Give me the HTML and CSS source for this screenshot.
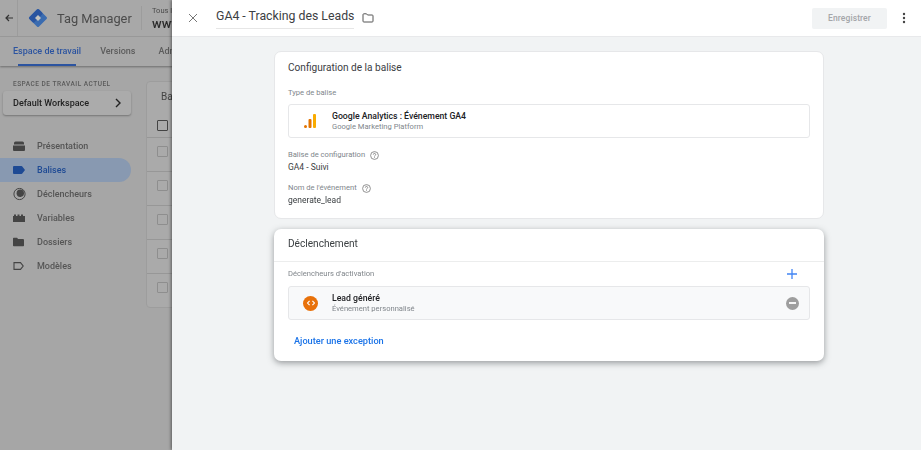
FILE: index.html
```html
<!DOCTYPE html>
<html lang="fr">
<head>
  <meta charset="UTF-8" />
  <title>Tag Manager</title>
  <link rel="stylesheet" href="styles.css">
</head>
<body>
  <div class="app">
    <header class="topbar">
      <button class="back">
        <svg width="10" height="10" viewBox="0 0 10 10"><path d="M9 5H2M5 2 2 5l3 3" fill="none" stroke="#333" stroke-width="1.2"/></svg>
      </button>
      <div class="brand">
        <svg class="logo" width="20" height="20" viewBox="0 0 20 20">
          <path d="M10 2.500 17.500 10 10 17.500 2.500 10Z" fill="#3b6cb0" stroke="#3b6cb0" stroke-width="3" stroke-linejoin="round"/>
          <path d="M10 2.500 13 5.500 5.500 13 2.500 10Z" fill="#2a55a0" stroke="#2a55a0" stroke-width="3" stroke-linejoin="round"/>
          <path d="M10 7 13 10 10 13 7 10Z" fill="#c4c4c0"/>
        </svg>
        <span class="brand-name">Tag Manager</span>
      </div>
      <div class="account">
        <span class="account-label">Tous l</span>
        <span class="account-name">www</span>
      </div>
    </header>
    <nav class="tabs">
      <span class="tab active">Espace de travail</span>
      <span class="tab">Versions</span>
      <span class="tab">Adm</span>
    </nav>
    <div class="work">
      <aside class="side">
        <div class="ws-label">ESPACE DE TRAVAIL ACTUEL</div>
        <div class="ws-button">
          <span>Default Workspace</span>
          <svg width="8" height="10" viewBox="0 0 8 10"><path d="M2 1l4 4-4 4" fill="none" stroke="#222" stroke-width="1.4"/></svg>
        </div>
        <ul class="nav">
          <li class="nav-item">
            <svg width="12" height="10" viewBox="0 0 12 10"><path d="M1 3.500V2a1.500 1.500 0 0 1 1.500-1.500h7A1.500 1.500 0 0 1 11 2v1.500ZM0 4.500h12V9a1 1 0 0 1-1 1H1a1 1 0 0 1-1-1Z" fill="#444"/></svg>
            Présentation
          </li>
          <li class="nav-item active">
            <svg width="12" height="8" viewBox="0 0 12 8"><path d="M1 0h7.500a1 1 0 0 1 .8.400L12 4 9.300 7.600a1 1 0 0 1-.8.400H1a1 1 0 0 1-1-1V1a1 1 0 0 1 1-1Z" fill="#1e4a94"/></svg>
            Balises
          </li>
          <li class="nav-item">
            <svg width="13" height="13" viewBox="0 0 13 13"><circle cx="6.500" cy="6.500" r="5.600" fill="none" stroke="#444" stroke-width="1"/><circle cx="7.300" cy="5.700" r="3.700" fill="#444"/><path d="M3.600 9.400A4 4 0 0 0 9.400 9" fill="none" stroke="#a6a6a6" stroke-width=".9"/></svg>
            Déclencheurs
          </li>
          <li class="nav-item">
            <svg width="12" height="8" viewBox="0 0 12 8"><path d="M0 8V2h1V.5h2V2h1.500V.5h2V2H8V.5h2V2h2v6Z" fill="#444"/></svg>
            Variables
          </li>
          <li class="nav-item">
            <svg width="11" height="9" viewBox="0 0 11 9"><path d="M0 1a1 1 0 0 1 1-1h3l1 1.500h5a1 1 0 0 1 1 1V8a1 1 0 0 1-1 1H1a1 1 0 0 1-1-1Z" fill="#444"/></svg>
            Dossiers
          </li>
          <li class="nav-item">
            <svg width="11" height="8" viewBox="0 0 11 8"><path d="M1 .6h6.500L10.200 4 7.500 7.400H1Z" fill="none" stroke="#444" stroke-width="1.100"/></svg>
            Modèles
          </li>
        </ul>
      </aside>
      <section class="list">
        <div class="list-title">Ba</div>
        <div class="list-head"><span class="check dark"></span></div>
        <div class="list-row"><span class="check"></span></div>
        <div class="list-row"><span class="check"></span></div>
        <div class="list-row"><span class="check"></span></div>
        <div class="list-row"><span class="check"></span></div>
        <div class="list-row"><span class="check"></span></div>
      </section>
    </div>
  </div>

  <main class="panel">
    <header class="panel-head">
      <button class="close">
        <svg width="10" height="10" viewBox="0 0 10 10"><path d="M1 1l8 8M9 1 1 9" stroke="#777" stroke-width="1"/></svg>
      </button>
      <h1 class="panel-title">GA4 - Tracking des Leads</h1>
      <svg class="folder" width="12" height="10" viewBox="0 0 12 10"><path d="M1 1.600a.8.8 0 0 1 .8-.8h2.700l1 1.200h4.700a.8.800 0 0 1 .8.800v5.400a.8.800 0 0 1-.8.800H1.800a.8.800 0 0 1-.8-.8Z" fill="none" stroke="#555" stroke-width="1"/></svg>
      <button class="save">Enregistrer</button>
      <svg class="more" width="4" height="12" viewBox="0 0 4 12"><circle cx="2" cy="2" r="1.200" fill="#444"/><circle cx="2" cy="6" r="1.200" fill="#444"/><circle cx="2" cy="10" r="1.200" fill="#444"/></svg>
    </header>

    <div class="panel-body">
      <section class="card">
        <h2 class="card-title">Configuration de la balise</h2>
        <div class="field-label">Type de balise</div>
        <div class="type-box">
          <svg class="type-icon" width="12" height="14" viewBox="0 0 12 14">
            <rect x="9" y="0" width="3" height="14" rx="1" fill="#f9ab00"/>
            <rect x="4.500" y="5" width="3" height="9" rx="1" fill="#e37400"/>
            <circle cx="1.500" cy="12.500" r="1.500" fill="#e37400"/>
          </svg>
          <div>
            <div class="type-name">Google Analytics : Événement GA4</div>
            <div class="type-sub">Google Marketing Platform</div>
          </div>
        </div>
        <div class="field-label help-label">Balise de configuration
          <svg width="9" height="9" viewBox="0 0 9 9"><circle cx="4.500" cy="4.500" r="3.900" fill="none" stroke="#777" stroke-width=".8"/><path d="M3.300 3.600a1.200 1.200 0 1 1 1.800 1c-.4.250-.6.450-.6.900M4.500 6.300v.7" fill="none" stroke="#777" stroke-width=".8"/></svg>
        </div>
        <div class="field-value">GA4 - Suivi</div>
        <div class="field-label help-label second">Nom de l'événement
          <svg width="9" height="9" viewBox="0 0 9 9"><circle cx="4.500" cy="4.500" r="3.900" fill="none" stroke="#777" stroke-width=".8"/><path d="M3.300 3.600a1.200 1.200 0 1 1 1.800 1c-.4.250-.6.450-.6.900M4.500 6.300v.7" fill="none" stroke="#777" stroke-width=".8"/></svg>
        </div>
        <div class="field-value">generate_lead</div>
      </section>

      <section class="card raised">
        <h2 class="raised-title">Déclenchement</h2>
        <div class="raised-body">
          <div class="trigger-head">
            <span class="field-label flat">Déclencheurs d'activation</span>
            <svg width="10" height="10" viewBox="0 0 10 10"><path d="M5 0v10M0 5h10" stroke="#4285f4" stroke-width="1.300"/></svg>
          </div>
          <div class="type-box trigger">
            <span class="trigger-icon">
              <svg width="8" height="6" viewBox="0 0 8 6"><path d="M2.600.8.600 3l2 2.200M5.400.8 7.400 3l-2 2.200" fill="none" stroke="#fff" stroke-width="1.100"/></svg>
            </span>
            <div>
              <div class="type-name">Lead généré</div>
              <div class="type-sub">Événement personnalisé</div>
            </div>
            <span class="remove"></span>
          </div>
          <a class="add-link">Ajouter une exception</a>
        </div>
      </section>
    </div>
  </main>
</body>
</html>
```

FILE: styles.css
```css
:root {
  --blue: #1a73e8;
  --line: #e6e7e9;
  --dim-line: #979797;
  --dim-text: #4a4a4a;
}

* {
  box-sizing: border-box;
}

html, body {
  height: 100%;
}

body {
  margin: 0;
  display: flex;
  height: 450px;
  overflow: hidden;
  font-family: Roboto, "Liberation Sans", sans-serif;
  background: #f1f3f4;
}

button {
  border: 0;
  padding: 0;
  background: none;
  font-family: inherit;
}

/* app behind the drawer, dimmed */
.app {
  width: 172px;
  flex: none;
  overflow: hidden;
  background: #a6a6a6;
  color: var(--dim-text);
  filter: blur(.3px);
}

.topbar {
  display: flex;
  align-items: center;
  height: 37px;
  width: 300px;
  background: #a8a8a8;
  border-bottom: 1px solid #9c9c9c;
}

.back {
  display: flex;
  align-items: center;
  justify-content: center;
  width: 18px;
  height: 36px;
  border-right: 1px solid #9c9c9c;
}

.brand {
  display: flex;
  align-items: center;
  gap: 9px;
  height: 36px;
  width: 123px;
  padding-left: 10px;
}

.brand-name {
  font-size: 12.800px;
  color: #4b4b4b;
}

.account {
  display: flex;
  flex-direction: column;
  gap: 2px;
  height: 24px;
  padding-left: 10px;
  border-left: 1px solid #9c9c9c;
}

.account-label {
  font-size: 7.500px;
  line-height: 9px;
}

.account-name {
  font-size: 13px;
  line-height: 14px;
  font-weight: 500;
  color: #2c2c2c;
}

.tabs {
  display: flex;
  height: 29px;
  width: 300px;
  padding-left: 13px;
  gap: 19px;
  background: #a8a8a8;
  box-shadow: 0 1px 2px rgba(0, 0, 0, .35);
  position: relative;
}

.tab {
  position: relative;
  font-size: 9px;
  font-weight: 500;
  line-height: 28px;
  color: #5c5c5c;
  white-space: nowrap;
}

.tab:last-child {
  margin-left: 4px;
}

.tab.active {
  color: #2c54a0;
}

.tab.active::after {
  content: "";
  position: absolute;
  left: 5px;
  right: 5px;
  bottom: 0;
  height: 2px;
  background: #2c54a0;
}

.work {
  display: flex;
  width: 300px;
  height: 385px;
}

.side {
  width: 146px;
  flex: none;
  padding-top: 14px;
}

.ws-label {
  margin-left: 13px;
  font-size: 6.500px;
  line-height: 8px;
  letter-spacing: .5px;
  font-weight: 500;
  color: #5a5a5a;
}

.ws-button {
  display: flex;
  align-items: center;
  justify-content: space-between;
  width: 128px;
  height: 24px;
  margin: 3px 0 0 3px;
  padding: 0 9px 0 10px;
  font-size: 9px;
  font-weight: 500;
  color: #222;
  background: #ababab;
  border-radius: 3px;
  box-shadow: 0 1px 2px rgba(0, 0, 0, .3);
}

.nav {
  list-style: none;
  margin: 19px 0 0;
  padding: 0;
}

.nav-item {
  position: relative;
  display: flex;
  align-items: center;
  width: 131px;
  height: 24px;
  padding-left: 37px;
  font-size: 9px;
  font-weight: 500;
  color: #555;
  border-radius: 0 12px 12px 0;
}

.nav-item svg {
  position: absolute;
  left: 13px;
  top: 50%;
  transform: translateY(-50%);
}

.nav-item.active {
  background: #8899b1;
  color: #1e4a94;
}

.list {
  width: 154px;
  height: 227px;
  margin-top: 15px;
  background: #aaa;
  border-radius: 4px;
  border: 1px solid #9d9d9d;
}

.list-title {
  height: 31px;
  padding-left: 14px;
  font-size: 10px;
  line-height: 30px;
  color: #444;
}

.list-head {
  height: 25px;
  padding: 7px 0 0 10px;
  border-bottom: 1px solid var(--dim-line);
}

.list-row {
  height: 34px;
  padding: 8px 0 0 10px;
  border-bottom: 1px solid var(--dim-line);
}

.list-row:last-child {
  border-bottom: 0;
}

.check {
  display: block;
  width: 11px;
  height: 11px;
  border: 1px solid #8e8e8e;
  border-radius: 1px;
}

.check.dark {
  border-color: #444;
}

/* drawer */
.panel {
  flex: 1;
  min-width: 0;
  background: #f1f3f4;
  box-shadow: -1px 0 3px rgba(0, 0, 0, .45);
  position: relative;
  filter: blur(.3px);
}

.panel-head {
  display: flex;
  align-items: center;
  height: 37px;
  padding: 0 15px 0 16px;
  background: #fff;
  border-bottom: 1px solid #e8e9eb;
}

.close {
  display: flex;
  width: 10px;
  height: 10px;
}

.panel-title {
  margin: 0 0 0 18px;
  padding-bottom: 3px;
  font-size: 12.300px;
  line-height: 17px;
  font-weight: 400;
  color: #3c4043;
  border-bottom: 1px solid #e6e6e6;
}

.folder {
  margin-left: 8px;
}

.save {
  margin-left: auto;
  width: 75px;
  height: 21px;
  font-size: 8.500px;
  font-weight: 500;
  letter-spacing: .1px;
  color: #a4a6a9;
  background: #f1f3f4;
  border-radius: 2px;
}

.more {
  margin-left: 15px;
}

.panel-body {
  display: flex;
  flex-direction: column;
  gap: 10px;
  width: 550px;
  margin: 14px 0 0 102px;
}

.card {
  height: 168px;
  padding: 0 13px;
  background: #fff;
  border: 1px solid var(--line);
  border-radius: 7px;
}

.card-title {
  margin: 9px 0 0;
  font-size: 10.100px;
  line-height: 14px;
  font-weight: 400;
  color: #3c4043;
}

.field-label {
  margin-top: 13px;
  font-size: 7.600px;
  line-height: 10px;
  color: #80868b;
}

.field-label.flat {
  margin: 0;
}

.help-label {
  display: flex;
  align-items: center;
  gap: 5px;
  margin-top: 12px;
}

.help-label.second {
  margin-top: 10px;
}

.field-value {
  margin-top: 1px;
  font-size: 8.500px;
  line-height: 12px;
  color: #3c4043;
}

.type-box {
  display: flex;
  align-items: center;
  height: 34px;
  margin-top: 6px;
  padding-left: 15px;
  border: 1px solid var(--line);
  border-radius: 3px;
}

.type-icon {
  margin-right: 16px;
}

.type-name {
  font-size: 8.700px;
  line-height: 11px;
  font-weight: 500;
  color: #202124;
}

.type-sub {
  font-size: 7.600px;
  line-height: 10px;
  color: #80868b;
}

.card.raised {
  height: 132px;
  padding: 0;
  border: 0;
  box-shadow: 0 2px 6px rgba(60, 64, 67, .5);
}

.raised-title {
  margin: 0;
  height: 33px;
  padding-left: 14px;
  font-size: 10.100px;
  line-height: 30px;
  font-weight: 400;
  color: #3c4043;
  border-bottom: 1px solid #eceded;
}

.raised-body {
  padding: 0 14px;
}

.trigger-head {
  display: flex;
  align-items: center;
  justify-content: space-between;
  height: 23px;
  padding-right: 13px;
}

.trigger {
  margin-top: 1px;
  padding-left: 14px;
  background: #f8f9fa;
}

.trigger-icon {
  display: flex;
  align-items: center;
  justify-content: center;
  width: 15px;
  height: 15px;
  margin-right: 14px;
  border-radius: 50%;
  background: #e8710a;
}

.remove {
  position: relative;
  width: 13px;
  height: 13px;
  margin: 0 10px 0 auto;
  border-radius: 50%;
  background: #9e9e9e;
}

.remove::after {
  content: "";
  position: absolute;
  left: 3px;
  right: 3px;
  top: 5.500px;
  height: 2px;
  background: #f5f5f5;
}

.add-link {
  display: block;
  margin: 15px 0 0 6px;
  font-size: 9.200px;
  line-height: 12px;
  font-weight: 500;
  color: var(--blue);
}
```
